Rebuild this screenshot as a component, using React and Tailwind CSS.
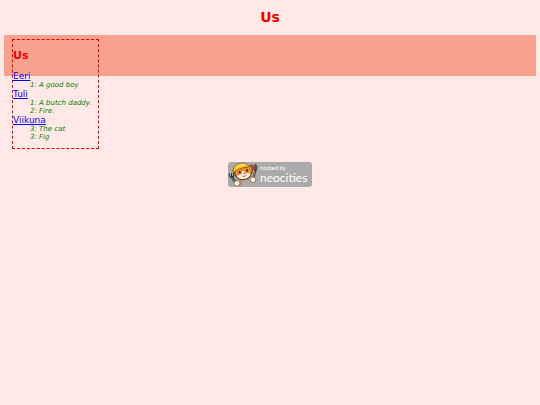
const people = [
  { name: "Eeri", notes: ["1: A good boy"] },
  { name: "Tuli", notes: ["1: A butch daddy.", "2: Fire."] },
  { name: "Viikuna", notes: ["3: The cat", "3: Fig"] },
];

function CatMascot() {
  return (
    <svg viewBox="0 0 32 26" className="h-[26px] w-8 shrink-0" aria-hidden="true">
      {/* brush held in the right paw */}
      <path d="M25 17 L27.6 8" stroke="#3b2a24" strokeWidth="2" strokeLinecap="round" />
      <path d="M25.4 15 L27.2 9" stroke="#d9a35c" strokeWidth="0.8" />
      <path d="M25.8 8 C25.2 5 26.2 3.4 27.6 2 C29.2 4 29 6.5 28 8.4 Z" fill="#a83a2c" stroke="#4a2a24" strokeWidth="0.6" />
      {/* face */}
      <path d="M6 7 L7.5 14 Q11 18.8 17.5 17.4 Q23 16 24 10 L24.2 3 L18 5 Z" fill="#f08a24" stroke="#4a2c14" strokeWidth="0.9" />
      <path d="M13.8 9 L15.5 9 L17.8 11.6 Q22 10.8 22.4 12.6 Q20 16.8 15 17 Q10.5 16.8 9 14 Q11 12.4 13.8 12.2 Z" fill="#fff4e4" />
      <ellipse cx="11.8" cy="10.2" rx="0.9" ry="1.3" fill="#2c211c" />
      <ellipse cx="19" cy="8.4" rx="0.9" ry="1.3" fill="#2c211c" />
      <path d="M15 11.4 L17.3 10.9 L16.5 12.5 Z" fill="#57301f" />
      <path d="M14 13.8 Q16.3 15.8 18.7 13" fill="none" stroke="#7a3a22" strokeWidth="0.7" />
      {/* hard hat */}
      <path d="M5 8.5 Q6 2.4 12.5 1.2 Q17.5 0.5 20.3 3 L23.6 4.6 Q19 4.6 14 6 Q9 7.4 5.3 10.4 Z" fill="#f5c832" stroke="#7b5a1c" strokeWidth="0.7" />
      <path d="M8 5.2 Q12 2.4 17 2.6" fill="none" stroke="#ffe982" strokeWidth="0.9" />
      {/* fork held in the left paw */}
      <path d="M4 15 L8 21.5" stroke="#30363d" strokeWidth="2.4" strokeLinecap="round" />
      <path d="M1 11.5 L1.6 14.4 L3.8 15.8 L6 13.8 L5.4 10.8 M3.2 11 L3.8 15" fill="none" stroke="#30363d" strokeWidth="1.1" />
      <path d="M4 15.5 L7.6 21" stroke="#8c9aa6" strokeWidth="0.9" />
      {/* paws */}
      <path d="M11 24 Q13.5 22.5 13 18.5" fill="none" stroke="#d97822" strokeWidth="1.3" />
      <circle cx="9" cy="21.3" r="2.9" fill="#fff9ee" stroke="#7a4c28" strokeWidth="0.7" />
      <circle cx="25" cy="17.8" r="2.8" fill="#fff9ee" stroke="#7a4c28" strokeWidth="0.7" />
    </svg>
  );
}

export default function App() {
  return (
    <div className="min-h-screen bg-[#ffe9e6] px-1 pt-2 font-['DejaVu_Sans',Verdana,sans-serif]">
      <h1 className="mb-2 text-center text-[14px] leading-[19px] font-bold text-[#f00000]">Us</h1>

      <header className="flex h-[41px] items-start bg-[#f9a18f] px-2 pt-1">
        <nav aria-label="Us" className="border border-dashed border-[#e60000] pr-[6px] pb-[7px]">
          <h2 className="py-2 text-[11px] leading-[15px] font-bold text-[#f00000]">Us</h2>
          <dl>
            {people.map((person) => (
              <div key={person.name}>
                <dt className="text-[9px] leading-[10px]">
                  <a href="#" className="text-[#0000ee] underline">{person.name}</a>
                </dt>
                {person.notes.map((note) => (
                  <dd key={note} className="ml-[17px] text-[7px] leading-[8px] whitespace-nowrap text-[#008000] italic">
                    {note}
                  </dd>
                ))}
              </div>
            ))}
          </dl>
        </nav>
      </header>

      <footer className="mt-[86px] flex justify-center">
        <a
          href="#"
          className="flex h-[25px] w-[84px] items-center rounded-[3px] bg-[#aaaaaa] font-[Lato,'Open_Sans',sans-serif] text-white"
        >
          <CatMascot />
          <span className="block whitespace-nowrap">
            <span className="block text-[6px] leading-[7px]">hosted by</span>
            <span className="block text-[12px] leading-[14px]">neocities</span>
          </span>
        </a>
      </footer>
    </div>
  );
}
